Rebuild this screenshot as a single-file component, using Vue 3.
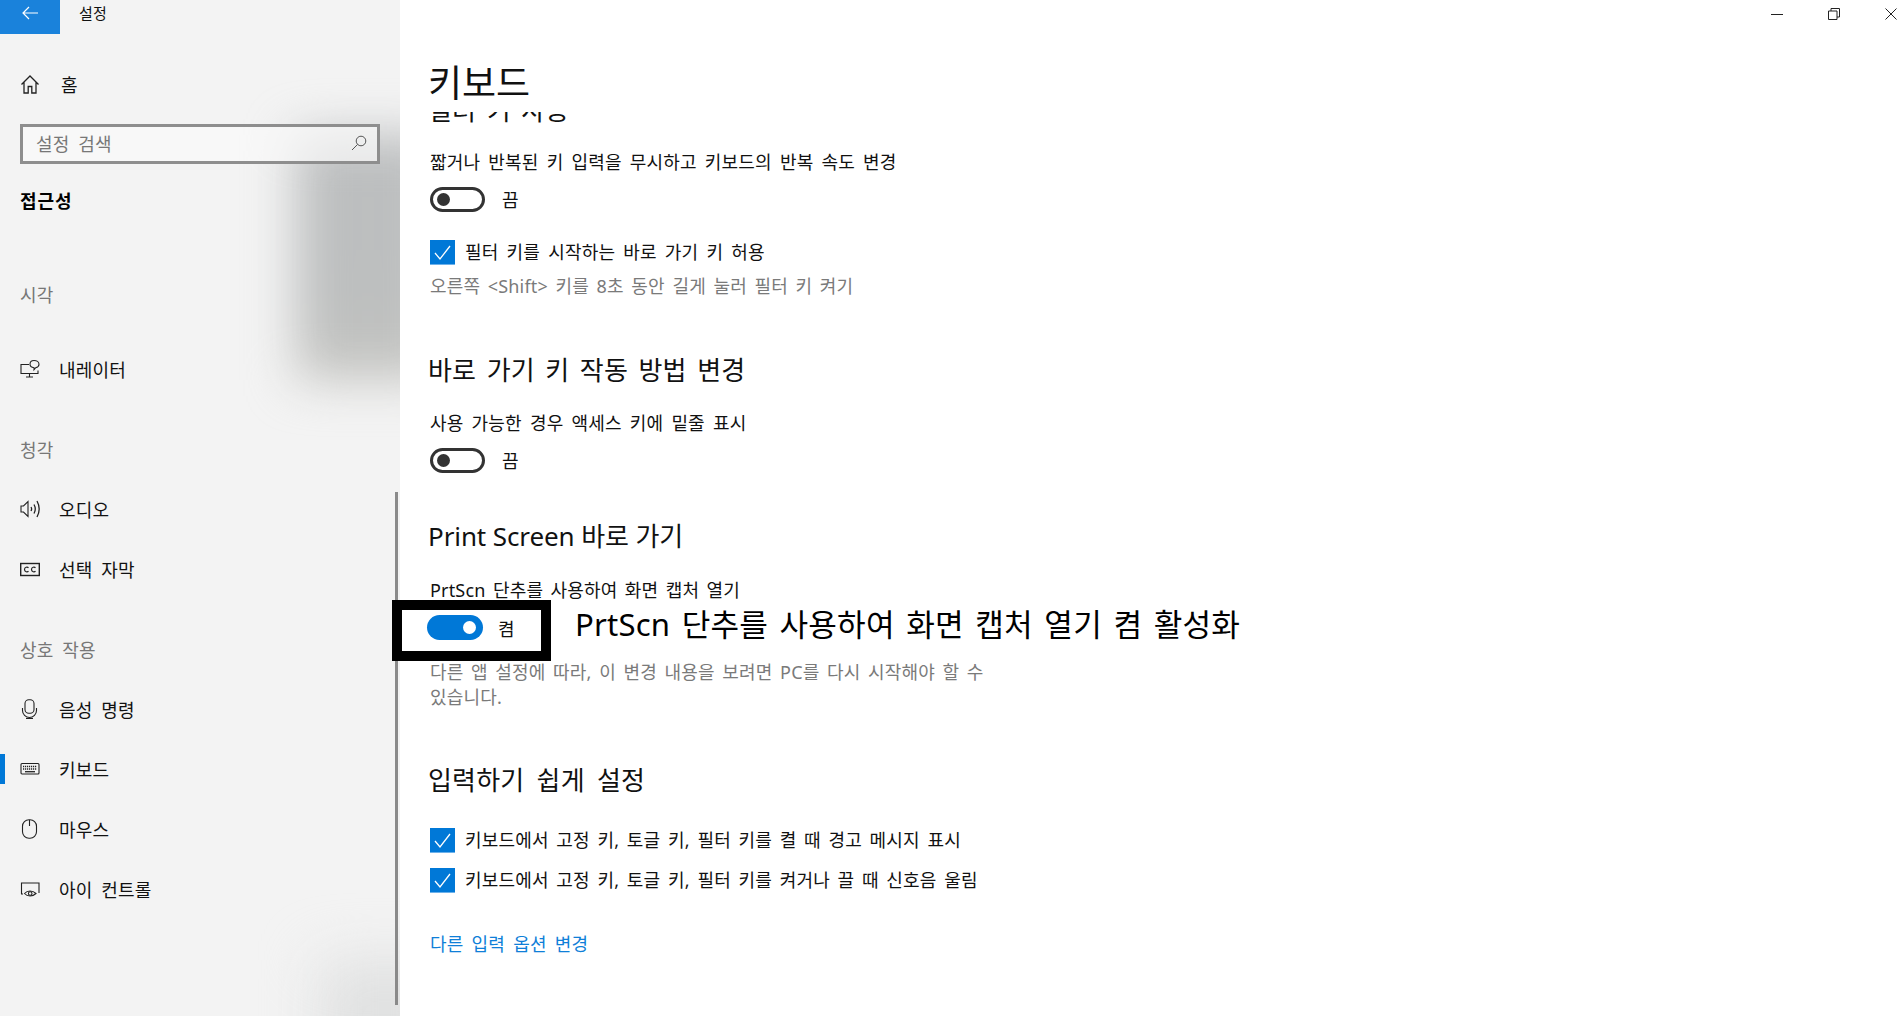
<template>
  <div class="window">
    <aside class="sidebar">
      <div class="smudge smudge-top"></div>
      <div class="smudge smudge-bottom"></div>
      <div class="titlebar">
        <button type="button" class="back-btn" aria-label="뒤로">
          <svg width="16" height="14" viewBox="0 0 16 14" fill="none" stroke="#fff" stroke-width="1.2">
            <path d="M1 7h15M7 1 1 7l6 6" />
          </svg>
        </button>
        <span class="app-title">설정</span>
      </div>

      <div class="nav-item home">
        <svg class="nav-icon" viewBox="0 0 20 20" fill="none" stroke="#222" stroke-width="1.3">
          <path d="M1.500 10.500 10 2l8.500 8.500M4 8v11h4.200v-6.500h3.600V19H16V8" />
        </svg>
        <span>홈</span>
      </div>

      <div class="search">
        <span class="search-text">설정 검색</span>
        <svg width="16" height="16" viewBox="0 0 16 16" fill="none" stroke="#555" stroke-width="1">
          <circle cx="10" cy="6" r="4.800" />
          <path d="M6.600 9.400 1 15" />
        </svg>
      </div>

      <div class="category">접근성</div>

      <div v-for="group in groups" :key="group.title" class="nav-group" :class="group.cls">
        <div class="nav-label">{{ group.title }}</div>
        <div
          v-for="item in group.items"
          :key="item.name"
          class="nav-item"
          :class="{ active: item.active }"
        >
          <svg class="nav-icon" viewBox="0 0 20 20" fill="none" stroke="#222" stroke-width="1.100">
            <template v-if="item.icon === 'narrator'">
              <path d="M9 5.500H1v9h17v-3M9.500 14.500v3M6 18h7" />
              <path d="M14 1.500c2.700 0 5 1.500 5 3.700 0 1.800-1.500 3.100-3.300 3.500l-1.700 2v-2c-2.200-.3-4-1.600-4-3.500 0-2.200 1.800-3.700 4-3.700z" />
            </template>
            <template v-else-if="item.icon === 'audio'">
              <path d="M1 7h2.500L8 2.500v15L3.500 13H1z" />
              <path d="M11 8c.8 1.300.8 2.700 0 4M14 5.500c1.700 3 1.700 6 0 9M17 2c2.900 5.300 2.900 10.700 0 16" stroke-width="1.300" />
            </template>
            <template v-else-if="item.icon === 'cc'">
              <rect x=".7" y="4.500" width="18.600" height="12" stroke-width="1.400" />
              <path d="M8.500 8.700c-1-.9-4-.9-4 1.800s3 2.700 4 1.800M15.500 8.700c-1-.9-4-.9-4 1.800s3 2.700 4 1.800" stroke-width="1.200" />
            </template>
            <template v-else-if="item.icon === 'mic'">
              <rect x="5" y=".8" width="9" height="13.500" rx="3.800" />
              <path d="M2.500 9v2.500a7 7 0 0 0 14 0V9M9.500 18.500v1M6 19.500h7" />
            </template>
            <template v-else-if="item.icon === 'keyboard'">
              <rect x="1" y="4.500" width="18" height="10.500" rx="1" />
              <path d="M3 7.500h14M3 10h14" stroke-width="1.300" stroke-dasharray="1.200 .8" />
              <path d="M5 12.700h10" stroke-width="1.300" />
            </template>
            <template v-else-if="item.icon === 'mouse'">
              <rect x="2.500" y=".8" width="14" height="18.400" rx="6.500" />
              <path d="M9.500 1v6" />
            </template>
            <template v-else-if="item.icon === 'eye'">
              <path d="M1.500 15V4h17.500v10" />
              <path d="M1 15h2M4.500 14.500c3-3.300 8-3.300 11.500 0-3.500 3.300-8.500 3.300-11.500 0z" />
              <circle cx="10.200" cy="14.500" r="1.800" />
            </template>
          </svg>
          <span>{{ item.name }}</span>
        </div>
      </div>
      <div class="sidebar-scroll"></div>
    </aside>

    <main class="main">
      <div class="window-controls">
        <svg width="12" height="12" viewBox="0 0 12 12" fill="none" stroke="#222" stroke-width="1"><path d="M0 6.500h12" /></svg>
        <svg width="12" height="12" viewBox="0 0 12 12" fill="none" stroke="#222" stroke-width="1"><path d="M.5 3h8.500v8.500H.5zM3 3V.5h8.500V9H9" /></svg>
        <svg width="12" height="12" viewBox="0 0 12 12" fill="none" stroke="#222" stroke-width="1"><path d="m.5.500 11 11M11.500.500l-11 11" /></svg>
      </div>
      <h1 class="page-title">키보드</h1>

      <div class="scroller">
        <h2 class="section clipped">필터 키 사용</h2>
        <p class="label label-first">짧거나 반복된 키 입력을 무시하고 키보드의 반복 속도 변경</p>
        <div class="toggle-row">
          <span class="toggle"></span>
          <span class="toggle-text">끔</span>
        </div>
        <label class="check-row filter-check">
          <span class="check">
            <svg width="25" height="25" viewBox="0 0 25 25" fill="none" stroke="#fff" stroke-width="1.300"><path d="m5 13 5 6L20 6" /></svg>
          </span>
          <span class="check-text">필터 키를 시작하는 바로 가기 키 허용</span>
        </label>
        <p class="hint hint-shift">오른쪽 &lt;Shift&gt; 키를 8초 동안 길게 눌러 필터 키 켜기</p>

        <h2 class="section section-gap">바로 가기 키 작동 방법 변경</h2>
        <p class="label label-access">사용 가능한 경우 액세스 키에 밑줄 표시</p>
        <div class="toggle-row">
          <span class="toggle"></span>
          <span class="toggle-text">끔</span>
        </div>

        <h2 class="section section-print">Print Screen 바로 가기</h2>
        <p class="label label-prt">PrtScn 단추를 사용하여 화면 캡처 열기</p>
        <div class="annotated">
          <div class="highlight">
            <span class="toggle on"></span>
            <span class="toggle-text">켬</span>
          </div>
          <span class="callout">PrtScn 단추를 사용하여 화면 캡처 열기 켬 활성화</span>
        </div>
        <p class="hint hint-restart">다른 앱 설정에 따라, 이 변경 내용을 보려면 PC를 다시 시작해야 할 수 있습니다.</p>

        <h2 class="section section-easy">입력하기 쉽게 설정</h2>
        <label v-for="(text, i) in warnings" :key="text" class="check-row warn" :class="i === 0 ? 'warn-first' : 'warn-next'">
          <span class="check">
            <svg width="25" height="25" viewBox="0 0 25 25" fill="none" stroke="#fff" stroke-width="1.300"><path d="m5 13 5 6L20 6" /></svg>
          </span>
          <span class="check-text">{{ text }}</span>
        </label>
        <a class="link">다른 입력 옵션 변경</a>
      </div>
    </main>
  </div>
</template>

<script setup>
const groups = [
  { title: '시각', cls: 'first', items: [{ name: '내레이터', icon: 'narrator' }] },
  {
    title: '청각',
    items: [
      { name: '오디오', icon: 'audio' },
      { name: '선택 자막', icon: 'cc' }
    ]
  },
  {
    title: '상호 작용',
    items: [
      { name: '음성 명령', icon: 'mic' },
      { name: '키보드', icon: 'keyboard', active: true },
      { name: '마우스', icon: 'mouse' },
      { name: '아이 컨트롤', icon: 'eye' }
    ]
  }
]

const warnings = [
  '키보드에서 고정 키, 토글 키, 필터 키를 켤 때 경고 메시지 표시',
  '키보드에서 고정 키, 토글 키, 필터 키를 켜거나 끌 때 신호음 울림'
]
</script>

<style>
html,
body {
  margin: 0;
  height: 100%;
  overflow: hidden;
  background: #fff;
}
</style>

<style scoped>
.window {
  display: flex;
  width: 1901px;
  height: 1016px;
  overflow: hidden;
  font-family: "Noto Sans", "Noto Sans CJK KR", sans-serif;
  font-size: 18px;
  letter-spacing: 0.01em;
  word-spacing: 0.22em;
  color: #111;
}

.sidebar {
  position: relative;
  z-index: 0;
  flex: 0 0 400px;
  height: 1016px;
  overflow: hidden;
  background: #f3f3f3;
}

/* blurred wallpaper showing through the acrylic pane */
.smudge {
  position: absolute;
  z-index: -1;
}

.smudge-top {
  left: 296px;
  top: 135px;
  width: 144px;
  height: 245px;
  background: linear-gradient(#bcbebf, #bdbfbf 70%, #c6c6c2);
  filter: blur(24px);
}

.smudge-bottom {
  left: 320px;
  top: 960px;
  width: 130px;
  height: 120px;
  background: #e0e1e1;
  filter: blur(28px);
}

.titlebar {
  display: flex;
  align-items: flex-start;
  height: 34px;
}

.back-btn {
  display: flex;
  align-items: center;
  justify-content: center;
  width: 60px;
  height: 34px;
  padding: 0 0 8px;
  border: 0;
  background: #1a82db;
}

.app-title {
  margin: 2px 0 0 19px;
  font-size: 15px;
  line-height: 22px;
}

.nav-item {
  position: relative;
  display: flex;
  align-items: center;
  height: 60px;
  padding-left: 20px;
}

.nav-item.active::before {
  content: "";
  position: absolute;
  left: 0;
  top: 15px;
  width: 5px;
  height: 30px;
  background: #0078d7;
}

.nav-icon {
  flex: none;
  width: 20px;
  height: 20px;
  margin-right: 19px;
}

.home {
  margin-top: 20px;
}

.home .nav-icon {
  margin-right: 21px;
}

.search {
  display: flex;
  align-items: center;
  justify-content: space-between;
  box-sizing: border-box;
  width: 360px;
  height: 40px;
  margin: 10px 0 0 20px;
  padding: 0 10px 2px 13px;
  border: 3px solid #8e8e8e;
  background: rgba(250, 250, 250, 0.7);
}

.search-text {
  color: #777;
}

.category {
  height: 30px;
  margin: 22px 0 0 20px;
  font-weight: 700;
  letter-spacing: 1px;
  line-height: 30px;
  color: #000;
}

.nav-group {
  margin-top: 36px;
}

.nav-group.first {
  margin-top: 64px;
}

.nav-label {
  height: 30px;
  margin-bottom: 14px;
  padding-left: 20px;
  line-height: 30px;
  color: #777;
}

.first .nav-label {
  margin-bottom: 29px;
}

.sidebar-scroll {
  position: absolute;
  left: 395px;
  top: 492px;
  width: 3px;
  height: 513px;
  background: #8a8a8a;
}

.main {
  position: relative;
  z-index: 1;
  flex: 1;
  min-width: 0;
  word-spacing: 0.18em;
}

.window-controls {
  display: flex;
  justify-content: flex-end;
  gap: 45px;
  height: 26px;
  padding: 8px 4px 0 0;
  box-sizing: border-box;
}

.page-title {
  height: 46px;
  margin: 34px 0 0 28px;
  font-size: 37px;
  font-weight: 400;
  letter-spacing: 0;
  line-height: 46px;
  color: #111;
}

.scroller {
  height: 904px;
  margin: 6px 0 0 -10px;
  padding-left: 40px;
  overflow: hidden;
}

.section {
  height: 36px;
  margin: 0 0 0 -2px;
  font-size: 26px;
  font-weight: 400;
  word-spacing: 0.135em;
  line-height: 36px;
}

.clipped {
  margin-top: -20px;
}

.section-gap {
  margin-top: 53px;
}

.section-print {
  margin-top: 45px;
  letter-spacing: -0.1px;
  word-spacing: 0;
}

.section-easy {
  margin-top: 52px;
  word-spacing: 0.2em;
}

.label {
  height: 28px;
  margin: 22px 0 0;
  line-height: 28px;
}

.label-first {
  margin-top: 20px;
}

.label-access {
  margin-top: 21px;
}

.label-prt {
  word-spacing: 0.14em;
}

.toggle-row {
  display: flex;
  align-items: center;
  height: 26px;
  margin-top: 10px;
}

.toggle {
  position: relative;
  box-sizing: border-box;
  width: 55px;
  height: 25px;
  border: 3px solid #333;
  border-radius: 13px;
}

.toggle::after {
  content: "";
  position: absolute;
  left: 4px;
  top: 3px;
  width: 13px;
  height: 13px;
  border-radius: 50%;
  background: #333;
}

.toggle.on {
  width: 56px;
  border: 0;
  background: #0078d7;
}

.toggle.on::after {
  left: 36px;
  top: 6px;
  background: #fff;
}

.toggle-text {
  margin-left: 17px;
}

.highlight .toggle-text {
  margin-left: 15px;
}

.check-row {
  display: flex;
  align-items: center;
  gap: 10px;
  height: 26px;
}

.check-text {
  margin-bottom: 2px;
}

.filter-check {
  margin-top: 27px;
}

.warn {
  word-spacing: 0.155em;
}

.warn-first {
  margin-top: 29px;
}

.warn-next {
  margin-top: 14px;
}

.check {
  display: block;
  width: 25px;
  height: 25px;
  background: #0078d7;
  border-bottom: 1px solid #6db1ea;
  box-sizing: border-box;
}

.check svg {
  display: block;
}

.hint {
  margin: 0;
  line-height: 25px;
  word-spacing: 0.15em;
  color: #7a7a7a;
}

.hint-shift {
  margin-top: 9px;
}

.hint-restart {
  width: 570px;
  margin-top: -1px;
}

.annotated {
  display: flex;
  align-items: center;
  gap: 24px;
  height: 61px;
  margin: -4px 0 0 -38px;
}

.highlight {
  display: flex;
  align-items: center;
  box-sizing: border-box;
  width: 159px;
  height: 61px;
  padding: 0 0 6px 25px;
  border: 10px solid #000;
  background: #fff;
}

.callout {
  margin-bottom: 16px;
  font-size: 31.1px;
  white-space: nowrap;
  color: #000;
}

.link {
  display: block;
  height: 28px;
  margin-top: 37px;
  line-height: 28px;
  color: #0f7fd8;
}
</style>
